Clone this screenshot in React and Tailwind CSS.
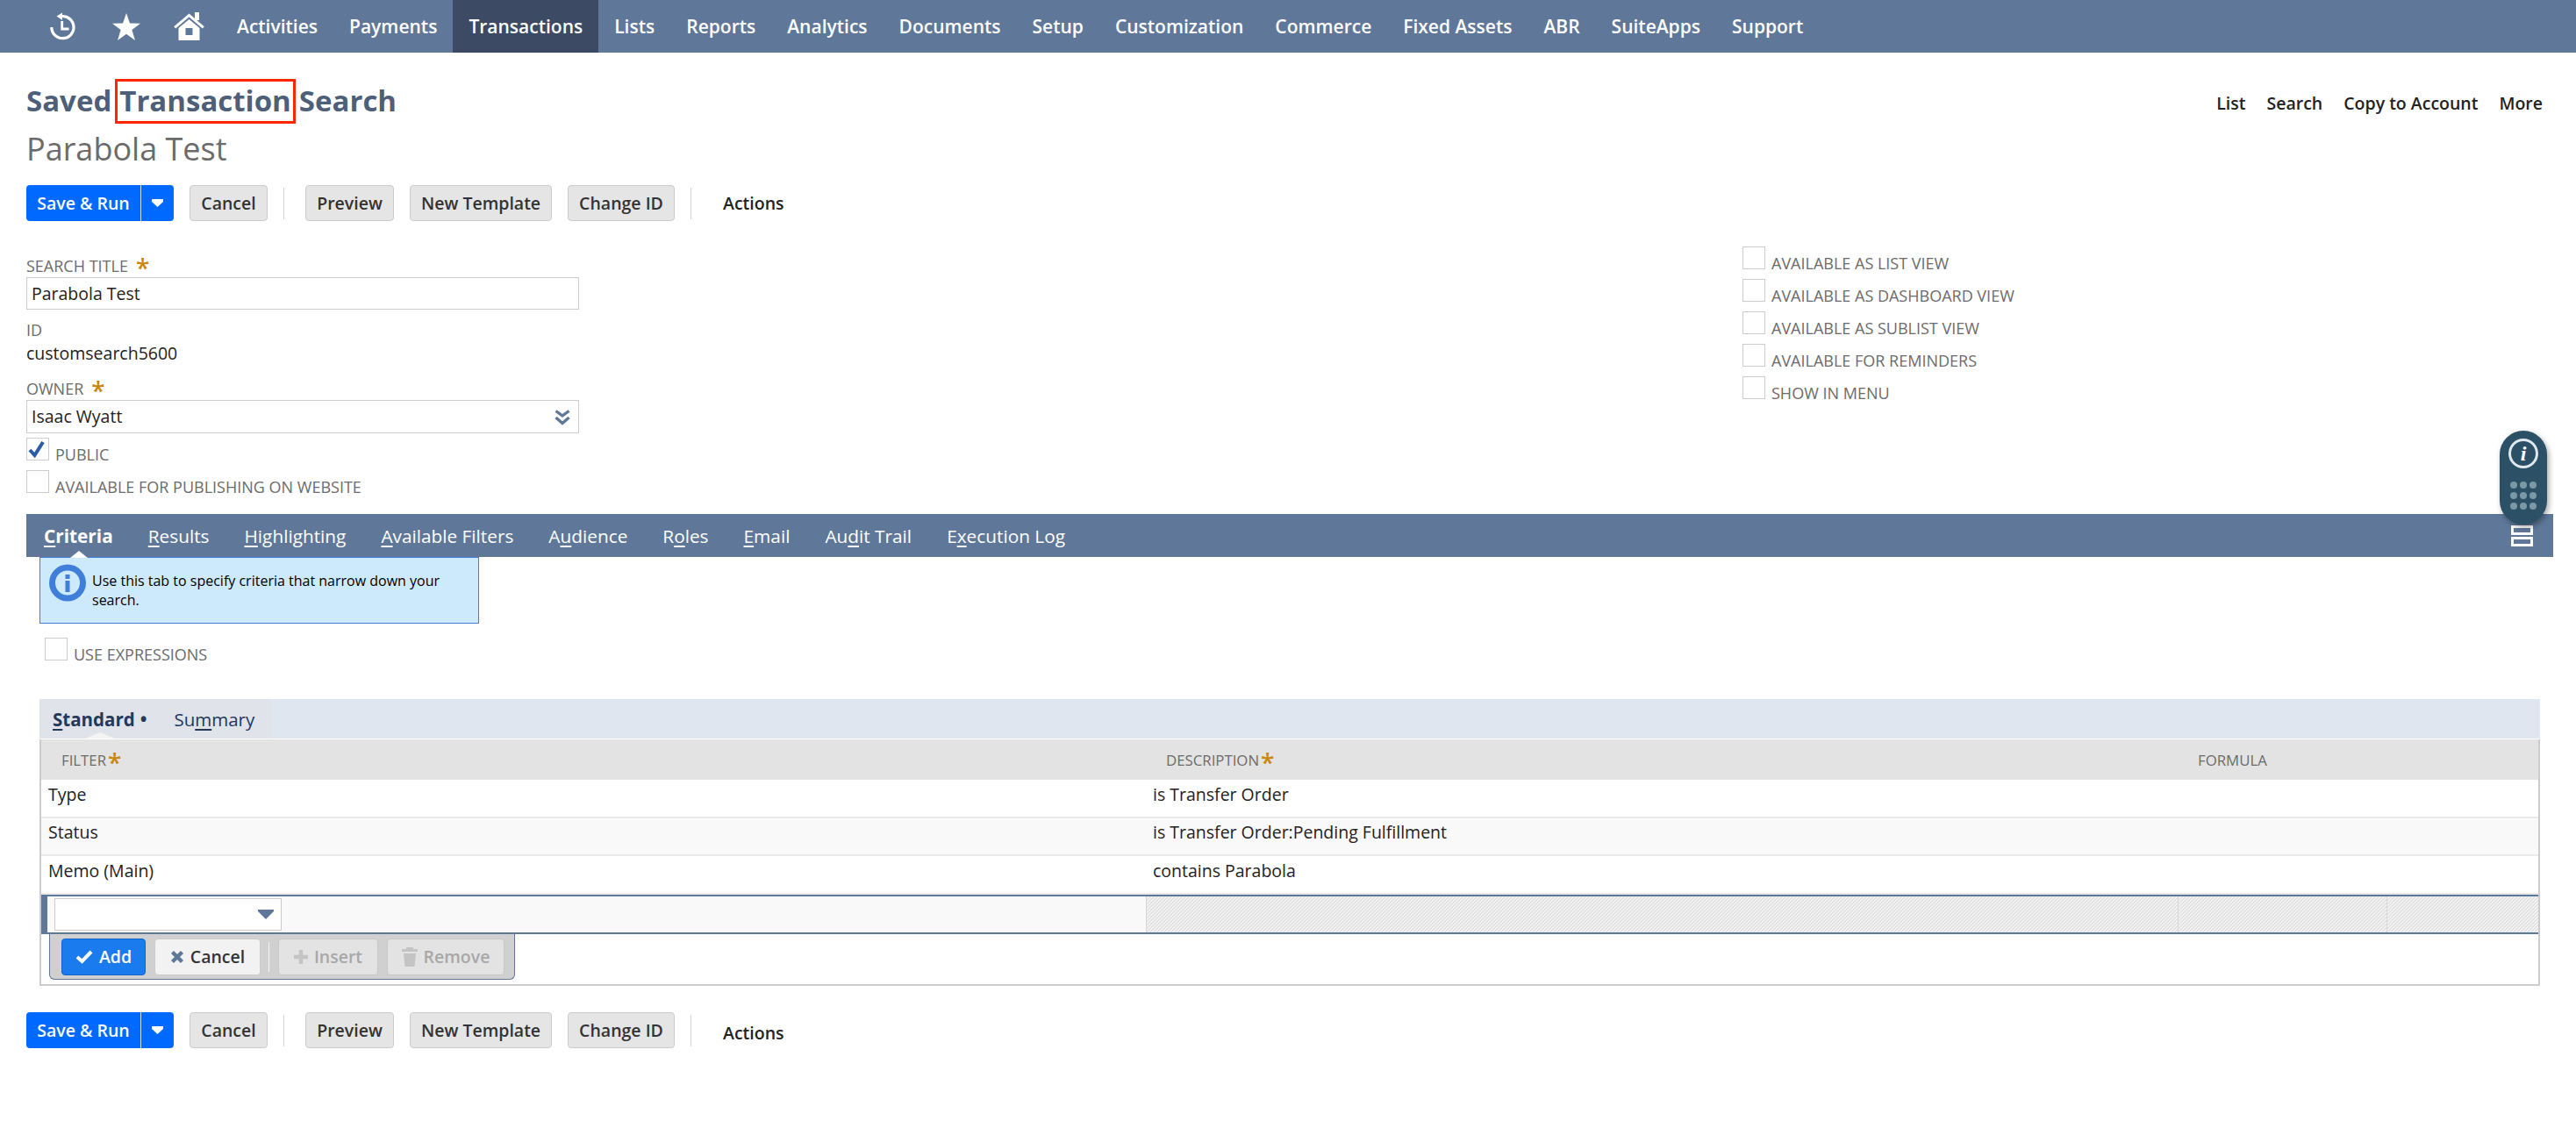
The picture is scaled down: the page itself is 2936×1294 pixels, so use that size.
const navItems = ["Activities", "Payments", "Transactions", "Lists", "Reports", "Analytics", "Documents", "Setup", "Customization", "Commerce", "Fixed Assets", "ABR", "SuiteApps", "Support"];

const tabs = [
  ["", "C", "riteria"],
  ["", "R", "esults"],
  ["", "H", "ighlighting"],
  ["", "A", "vailable Filters"],
  ["A", "u", "dience"],
  ["R", "o", "les"],
  ["", "E", "mail"],
  ["Au", "d", "it Trail"],
  ["E", "x", "ecution Log"],
];

const rows = [
  ["Type", "is Transfer Order"],
  ["Status", "is Transfer Order:Pending Fulfillment"],
  ["Memo (Main)", "contains Parabola"],
];

const HistoryIcon = () => (
  <svg width="30" height="32" viewBox="0 0 30 32" fill="none" className="shrink-0">
    <path d="M13 4.6 A12.6 12.6 0 1 1 1.8 17" stroke="white" strokeWidth="3.2" />
    <path d="M7.5 4.6 L14 0.6 V9 Z" fill="white" />
    <path d="M13.7 10 V19 H21.5" stroke="white" strokeWidth="2.8" />
  </svg>
);

const StarIcon = () => (
  <svg width="32" height="31" viewBox="0 0 32 31" className="shrink-0">
    <path d="M16 0 L20 11.6 L32 11.8 L22.4 19 L25.9 31 L16 23.8 L6.1 31 L9.6 19 L0 11.8 L12 11.6 Z" fill="white" />
  </svg>
);

const HomeIcon = () => (
  <svg width="35" height="32" viewBox="0 0 35 32" fill="none" className="shrink-0">
    <rect x="24" y="0" width="5" height="9" fill="white" />
    <path d="M1.2 17.4 L17.5 3.4 L33.8 17.4" stroke="white" strokeWidth="3" />
    <path fillRule="evenodd" d="M5.5 18 L17.5 8 L29.5 18 V32 H5.5 Z M13.5 18 V26 H21.5 V18 Z" fill="white" />
  </svg>
);

const Checkbox = ({ checked }) => (
  <span className="relative inline-block w-[26px] h-[26px] shrink-0 border border-[#cccccc] bg-white">
    {checked && (
      <svg width="20" height="20" viewBox="0 0 20 20" className="absolute left-[1px] top-[2px]">
        <path d="M2 11 L7.5 17 L17 2" fill="none" stroke="#2a5ca8" strokeWidth="4" />
      </svg>
    )}
  </span>
);

const CheckField = ({ label, checked }) => (
  <div className="flex items-end h-[26px] gap-[7px] text-[#6b6b6b] text-[18px] leading-none whitespace-nowrap">
    <Checkbox checked={checked} />
    <span className="translate-y-[2px]">{label}</span>
  </div>
);

const Required = ({ className = "translate-y-[2px]" }) => (
  <span className={`text-[#c9870c] text-[28px] leading-none font-semibold ${className}`}>*</span>
);

const FieldLabel = ({ children, required, className }) => (
  <div className={`flex items-center gap-[9px] text-[#6b6b6b] text-[18px] leading-none ${className}`}>
    <span className="-translate-y-[2px]">{children}</span>
    {required && <Required className="translate-y-0" />}
  </div>
);

const GrayButton = ({ children, className = "" }) => (
  <button className={`h-[41px] rounded-[4px] border border-[#cccccc] bg-[#e5e5e5] text-[#333333] text-[19.5px] font-semibold flex items-center justify-center ${className}`}>
    {children}
  </button>
);

const Sep = ({ className }) => <span className={`block w-px h-[36px] bg-[#d4d4d4] ${className}`} />;

const ButtonRow = ({ actionsOffset }) => (
  <div className="flex items-center h-[41px]">
    <div className="flex h-[41px] w-[168px] rounded-[4px] bg-[#0069ff] text-white text-[19.5px] font-semibold">
      <span className="w-[130px] flex items-center justify-center">Save &amp; Run</span>
      <span className="flex-1 border-l border-[#cfe1ff] flex items-center justify-center">
        <svg width="13" height="9" viewBox="0 0 13 9">
          <path d="M0 0 H13 V3 L6.5 9 L0 3 Z" fill="white" />
        </svg>
      </span>
    </div>
    <GrayButton className="ml-[18px] w-[89px]">Cancel</GrayButton>
    <Sep className="ml-[18px]" />
    <GrayButton className="ml-[24px] w-[101px]">Preview</GrayButton>
    <GrayButton className="ml-[18px] w-[162px]">New Template</GrayButton>
    <GrayButton className="ml-[18px] w-[122px]">Change ID</GrayButton>
    <Sep className="ml-[18px]" />
    <span className={`ml-[36px] text-[#222222] text-[19.5px] font-semibold ${actionsOffset}`}>Actions</span>
  </div>
);

const ToolButton = ({ children, className }) => (
  <button className={`h-[42px] rounded-[4px] border flex items-center justify-center gap-[7px] text-[19.5px] font-semibold ${className}`}>
    {children}
  </button>
);

export default function App() {
  return (
    <div className="relative min-h-[1294px] bg-white font-['Open_Sans',sans-serif] overflow-hidden">
      {/* top nav */}
      <nav className="flex items-center h-[60px] bg-[#5f7899] text-white text-[21px] font-semibold">
        <div className="flex items-center w-[252px] pl-[57px]">
          <HistoryIcon />
          <span className="ml-[41px]"><StarIcon /></span>
          <span className="ml-[38px]"><HomeIcon /></span>
        </div>
        {navItems.map((item) => (
          <a key={item} className={`h-full flex items-center px-[18px] pt-[1px] ${item === "Transactions" ? "bg-[#3c4a63]" : ""}`}>
            {item}
          </a>
        ))}
      </nav>

      {/* page title */}
      <div className="flex justify-between pt-[30px] pl-[30px] pr-[38px]">
        <h1 className="h-[50px] flex items-center gap-[9px] text-[33px] font-bold text-[#4d5f79] leading-none">
          <span className="-translate-y-[1px]">Saved</span>
          <span className="relative -translate-y-[1px]">
            Transaction
            <span className="absolute left-[-5px] right-[-5px] top-[-8px] h-[51px] border-[3px] border-[#ff2600]" />
          </span>
          <span className="-translate-y-[1px]">Search</span>
        </h1>
        <div className="flex items-center gap-[24px] h-[56px] text-[19.5px] font-semibold text-[#222222]">
          <span>List</span>
          <span>Search</span>
          <span>Copy to Account</span>
          <span>More</span>
        </div>
      </div>
      <div className="pl-[30px] mt-[-1px] h-[50px] flex items-center text-[36px] text-[#6b6b6b] leading-none">Parabola Test</div>

      <div className="pl-[30px] mt-[16px]">
        <ButtonRow actionsOffset="" />
      </div>

      {/* main fields */}
      <div className="grid grid-cols-[1956px_1fr] pl-[30px] mt-[29px]">
        <div className="w-[630px] pt-[12px]">
          <FieldLabel required className="h-[23px]">SEARCH TITLE</FieldLabel>
          <div className="h-[37px] border border-[#cccccc] px-[5px] flex items-center text-[19.5px] text-[#222222]">Parabola Test</div>
          <FieldLabel className="h-[22px] mt-[14px]">ID</FieldLabel>
          <div className="h-[28px] flex items-center text-[19.5px] text-[#222222]">customsearch5600</div>
          <FieldLabel required className="h-[23px] mt-[16px]">OWNER</FieldLabel>
          <div className="relative h-[38px] border border-[#cccccc] px-[5px] flex items-center text-[19.5px] text-[#222222]">
            Isaac Wyatt
            <svg width="18" height="18" viewBox="0 0 18 18" fill="none" className="absolute right-[9px] top-[10px]">
              <path d="M1.5 1.5 L9 7 L16.5 1.5 M1.5 9 L9 15.5 L16.5 9" stroke="#5f7899" strokeWidth="3.4" />
            </svg>
          </div>
          <div className="mt-[5px]"><CheckField checked label="PUBLIC" /></div>
          <div className="mt-[11px]"><CheckField label="AVAILABLE FOR PUBLISHING ON WEBSITE" /></div>
        </div>
        <div className="flex flex-col gap-[11px]">
          <CheckField label="AVAILABLE AS LIST VIEW" />
          <CheckField label="AVAILABLE AS DASHBOARD VIEW" />
          <CheckField label="AVAILABLE AS SUBLIST VIEW" />
          <CheckField label="AVAILABLE FOR REMINDERS" />
          <CheckField label="SHOW IN MENU" />
        </div>
      </div>

      {/* tab bar */}
      <div className="relative flex items-center h-[49px] mt-[24px] ml-[30px] mr-[26px] pl-[20px] gap-[40px] bg-[#5f7899] text-white text-[20.8px]">
        {tabs.map(([pre, key, post], i) => (
          <span key={post} className={`relative whitespace-nowrap translate-y-[1px] ${i === 0 ? "font-bold" : ""}`}>
            {pre}<u className="underline-offset-[3px]">{key}</u>{post}
            {i === 0 && (
              <span className="absolute left-[30px] bottom-[-9px] w-0 h-0 border-x-[10px] border-x-transparent border-b-[8px] border-b-white" />
            )}
          </span>
        ))}
        <span className="ml-auto mr-[23px] flex flex-col gap-[2px] w-[25px]">
          <span className="h-[11px] border-[3px] border-white" />
          <span className="h-[11px] border-[3px] border-white" />
        </span>
      </div>

      {/* help tip */}
      <div className="ml-[45px] w-[501px] h-[76px] flex gap-[7px] pl-[10px] pt-[7px] bg-[#cdeafd] border border-[#3f7fd9] text-black text-[16px]">
        <svg width="42" height="43" viewBox="0 0 42 43" className="shrink-0">
          <circle cx="21" cy="21.5" r="21" fill="#3f7fd9" />
          <circle cx="21" cy="21.5" r="14" fill="#cdeafd" />
          <rect x="18.5" y="12" width="5" height="5" fill="#3f7fd9" />
          <rect x="18.5" y="19" width="5" height="13" fill="#3f7fd9" />
        </svg>
        <p className="w-[400px] leading-[22px] pt-[8px]">Use this tab to specify criteria that narrow down your search.</p>
      </div>

      <div className="ml-[51px] mt-[16px]">
        <CheckField label="USE EXPRESSIONS" />
      </div>

      {/* criteria sublist */}
      <div className="ml-[45px] mr-[41px] mt-[44px]">
        <div className="flex h-[45px] bg-[#dfe6ef] text-[#24385b] text-[20.5px]">
          <div className="relative flex items-center w-[264px] pl-[15px] pt-[2px] bg-[#e0e3ea]">
            <span className="font-bold"><u className="underline-offset-[3px]">S</u>tandard</span>
            <span className="ml-[6px] font-bold">•</span>
            <span className="ml-[31px]">Su<u className="underline-offset-[3px]">m</u>mary</span>
            <span className="absolute left-[52px] bottom-0 w-0 h-0 border-x-[17px] border-x-transparent border-b-[7px] border-b-[#f4f4f4]" />
          </div>
        </div>
        <div className="border-2 border-t-0 border-[#cccccc] h-[281px]">
          <div className="grid grid-cols-[1259px_1176px_1fr] h-[46px] mt-px pt-[2px] bg-[#e3e3e3] text-[#6b6b6b] text-[16.8px]">
            <div className="flex items-center pl-[23px] gap-[2px]"><span>FILTER</span><Required /></div>
            <div className="flex items-center pl-[23px] gap-[2px]"><span>DESCRIPTION</span><Required /></div>
            <div className="flex items-center pl-[23px]">FORMULA</div>
          </div>
          {rows.map(([filter, desc], i) => (
            <div key={filter} className={`grid grid-cols-[1259px_1fr] border-b-2 border-[#eaeaea] text-[19.5px] text-[#222222] ${i === 1 ? "h-[43px] bg-[#f9f9f9]" : "h-[44px] bg-white"}`}>
              <div className="pl-[8px] flex items-center pb-[9px]">{filter}</div>
              <div className="pl-[8px] flex items-center pb-[9px]">{desc}</div>
            </div>
          ))}
          {/* edit row */}
          <div className="grid grid-cols-[1252px_1176px_238px_1fr] h-[45px] border-y-2 border-[#5f7899] border-l-[7px] bg-[#f9f9f9]">
            <div className="pl-[8px] pt-[2px]">
              <div className="relative w-[259px] h-[37px] border border-[#cccccc] bg-white">
                <svg width="18" height="11" viewBox="0 0 18 11" className="absolute right-[8px] top-[12px]">
                  <path d="M0 0 H18 V2 L9 11 L0 2 Z" fill="#5f7899" />
                </svg>
              </div>
            </div>
            <div className="border-l border-[#d8d8d8] bg-[repeating-linear-gradient(135deg,#e0e0e0,#e0e0e0_1.414px,#f4f4f4_1.414px,#f4f4f4_2.828px)]" />
            <div className="border-l border-[#d8d8d8] bg-[repeating-linear-gradient(135deg,#e0e0e0,#e0e0e0_1.414px,#f4f4f4_1.414px,#f4f4f4_2.828px)]" />
            <div className="border-l border-[#d8d8d8] bg-[repeating-linear-gradient(135deg,#e0e0e0,#e0e0e0_1.414px,#f4f4f4_1.414px,#f4f4f4_2.828px)]" />
          </div>
          {/* row actions */}
          <div className="ml-[9px] w-[531px] h-[52px] flex items-start pt-[5px] pl-[13px] bg-[#d0d0d0] border border-t-0 border-[#5f7899] rounded-b-[6px]">
            <ToolButton className="w-[96px] bg-[#1a7bef] border-[#1565c8] text-white">
              <svg width="20" height="16" viewBox="0 0 20 16"><path d="M2 8 L7.5 13 L18 2" fill="none" stroke="white" strokeWidth="4" /></svg>
              Add
            </ToolButton>
            <ToolButton className="ml-[10px] w-[121px] bg-[#f2f2f2] border-[#cccccc] text-[#333333]">
              <svg width="16" height="16" viewBox="0 0 16 16"><path d="M2.5 2.5 L13.5 13.5 M13.5 2.5 L2.5 13.5" stroke="#5f7899" strokeWidth="4.4" /></svg>
              Cancel
            </ToolButton>
            <span className="ml-[9px] mt-[4px] w-px h-[34px] bg-[#f4f4f4]" />
            <ToolButton className="ml-[10px] w-[114px] bg-[#e3e3e3] border-[#c8c8c8] text-[#a8a8a8]">
              <svg width="16" height="16" viewBox="0 0 16 16"><path d="M8 0 V16 M0 8 H16" stroke="#c4c4c4" strokeWidth="4.4" /></svg>
              Insert
            </ToolButton>
            <ToolButton className="ml-[10px] w-[134px] bg-[#e3e3e3] border-[#c8c8c8] text-[#a8a8a8]">
              <svg width="18" height="22" viewBox="0 0 18 22"><path d="M5 0 H13 V2 H18 V5 H0 V2 H5 Z M2 7 H16 L14.5 22 H3.5 Z" fill="#c4c4c4" /></svg>
              Remove
            </ToolButton>
          </div>
        </div>
      </div>

      <div className="pl-[30px] mt-[30px]">
        <ButtonRow actionsOffset="translate-y-[3px]" />
      </div>

      {/* floating widget */}
      <div className="absolute left-[2849px] top-[491px] w-[54px] h-[107px] rounded-full bg-[#2c5166] shadow-[2px_3px_6px_rgba(0,0,0,0.35)] flex flex-col items-center pt-[9px]">
        <span className="w-[34px] h-[34px] rounded-full border-[3px] border-[#dfe8ec] text-white font-['Liberation_Serif',serif] italic font-bold text-[24px] leading-[28px] text-center">i</span>
        <div className="grid grid-cols-3 gap-x-[3px] gap-y-[4px] mt-[15px]">
          {[0, 1, 2, 3, 4, 5, 6, 7, 8].map((n) => (
            <span key={n} className="w-[8px] h-[8px] rounded-full bg-[#7a98a6]" />
          ))}
        </div>
      </div>
    </div>
  );
}
